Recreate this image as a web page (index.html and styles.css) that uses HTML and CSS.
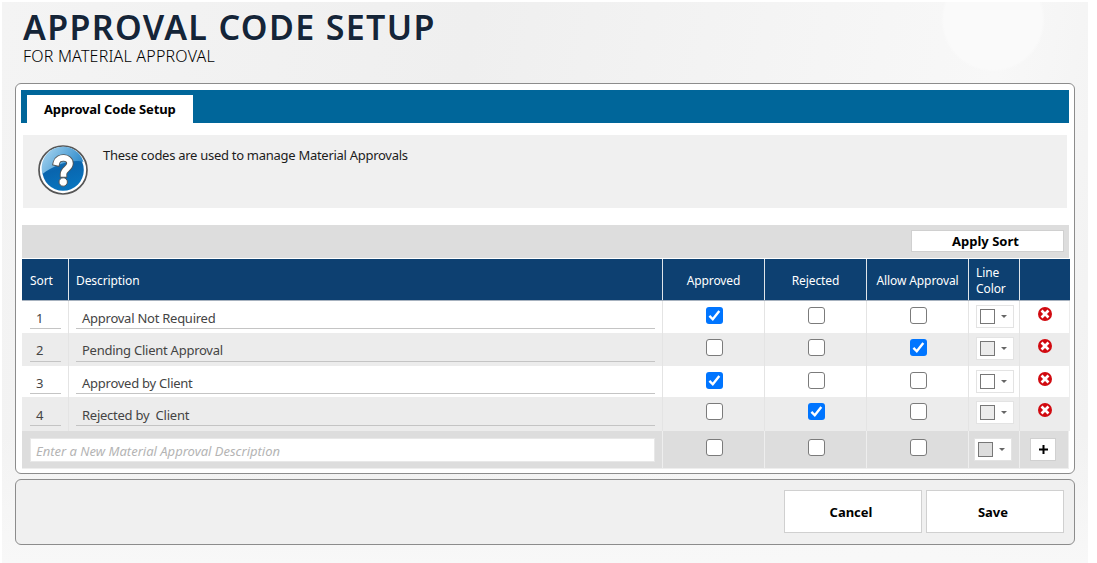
FILE: index.html
```html
<!DOCTYPE html>
<html lang="en">
<head>
<meta charset="utf-8">
<title>Approval Code Setup</title>
<link rel="stylesheet" href="styles.css">
</head>
<body>
<svg width="0" height="0" class="defs">
  <defs>
    <symbol id="remove" viewBox="0 0 14 14"><circle cx="7" cy="7" r="7" fill="#d10a10"/><path d="M4.5 4.5l5 5M9.5 4.5l-5 5" stroke="#fff" stroke-width="2.7" stroke-linecap="square"/></symbol>
  </defs>
</svg>
<div class="page">
  <header class="head">
    <h1 class="title">APPROVAL CODE SETUP</h1>
    <div class="subtitle">FOR MATERIAL APPROVAL</div>
  </header>
  <main class="panel">
    <nav class="tabs"><div class="tab"><span>Approval Code Setup</span></div></nav>
    <section class="info">
      <svg class="help" width="50" height="50" viewBox="0 0 50 50">
        <defs>
          <linearGradient id="blue" x1="0" y1="0" x2="0.3" y2="1"><stop offset="0" stop-color="#2f86c6"/><stop offset=".55" stop-color="#0965ae"/><stop offset="1" stop-color="#0873bd"/></linearGradient>
          <linearGradient id="shine" x1="0" y1="0" x2="1" y2=".5"><stop offset="0" stop-color="#b0daf2"/><stop offset="1" stop-color="#2d8acb"/></linearGradient>
        </defs>
        <circle cx="25" cy="25" r="24" fill="#fff" stroke="#555" stroke-width="1.7"/>
        <circle cx="25" cy="25" r="20.8" fill="url(#blue)"/>
        <path d="M4.5 29A20.8 20.8 0 0 1 45.5 17C40 15 31 16 23 19 15 22 9 25 4.500 29Z" fill="url(#shine)"/>
        <path d="M18.500 17.500C20 11 32 11.500 32 18.200 32 23.500 25.500 24 25.500 29" fill="none" stroke="#555" stroke-width="7.400" stroke-linecap="square"/>
        <circle cx="25.200" cy="37" r="4.200" fill="#fff" stroke="#555"/>
        <path d="M18.500 17.500C20 11 32 11.500 32 18.200 32 23.500 25.500 24 25.500 29" fill="none" stroke="#fff" stroke-width="5.600" stroke-linecap="square"/>
      </svg>
      <p class="info-text">These codes are used to manage Material Approvals</p>
    </section>
    <div class="toolbar"><button class="btn apply">Apply Sort</button></div>
    <div class="table">
      <div class="row header">
        <div class="cell"><span>Sort</span></div><div class="cell"><span>Description</span></div>
        <div class="cell mid"><span>Approved</span></div><div class="cell mid"><span>Rejected</span></div><div class="cell mid"><span>Allow Approval</span></div>
        <div class="cell"><span>Line<br>Color</span></div><div class="cell"></div>
      </div>
      <div class="row r1">
        <div class="cell"><div class="field num">1</div></div><div class="cell"><div class="field desc">Approval Not Required</div></div>
        <div class="cell mid"><i class="check on"><svg viewBox="0 0 17 17"><path d="M3.400 8.800l3.400 3.500 6.500-8.300"/></svg></i></div><div class="cell mid"><i class="check"></i></div><div class="cell mid"><i class="check"></i></div>
        <div class="cell"><div class="picker"><i class="swatch"></i><i class="arrow"></i></div></div><div class="cell mid"><svg class="remove"><use href="#remove"/></svg></div>
      </div>
      <div class="row r2 alt">
        <div class="cell"><div class="field num">2</div></div><div class="cell"><div class="field desc">Pending Client Approval</div></div>
        <div class="cell mid"><i class="check"></i></div><div class="cell mid"><i class="check"></i></div><div class="cell mid"><i class="check on"><svg viewBox="0 0 17 17"><path d="M3.400 8.800l3.400 3.500 6.500-8.300"/></svg></i></div>
        <div class="cell"><div class="picker"><i class="swatch"></i><i class="arrow"></i></div></div><div class="cell mid"><svg class="remove"><use href="#remove"/></svg></div>
      </div>
      <div class="row r3">
        <div class="cell"><div class="field num">3</div></div><div class="cell"><div class="field desc">Approved by Client</div></div>
        <div class="cell mid"><i class="check on"><svg viewBox="0 0 17 17"><path d="M3.400 8.800l3.400 3.500 6.500-8.300"/></svg></i></div><div class="cell mid"><i class="check"></i></div><div class="cell mid"><i class="check"></i></div>
        <div class="cell"><div class="picker"><i class="swatch"></i><i class="arrow"></i></div></div><div class="cell mid"><svg class="remove"><use href="#remove"/></svg></div>
      </div>
      <div class="row r4 alt">
        <div class="cell"><div class="field num">4</div></div><div class="cell"><div class="field desc">Rejected by&nbsp; Client</div></div>
        <div class="cell mid"><i class="check"></i></div><div class="cell mid"><i class="check on"><svg viewBox="0 0 17 17"><path d="M3.400 8.800l3.400 3.500 6.500-8.300"/></svg></i></div><div class="cell mid"><i class="check"></i></div>
        <div class="cell"><div class="picker"><i class="swatch"></i><i class="arrow"></i></div></div><div class="cell mid"><svg class="remove"><use href="#remove"/></svg></div>
      </div>
      <div class="row new">
        <div class="cell wide"><div class="entry">Enter a New Material Approval Description</div></div>
        <div class="cell mid"><i class="check"></i></div><div class="cell mid"><i class="check"></i></div><div class="cell mid"><i class="check"></i></div>
        <div class="cell"><div class="picker"><i class="swatch"></i><i class="arrow"></i></div></div><div class="cell"><button class="add"><svg width="9" height="9" viewBox="0 0 9 9"><path d="M4.500 0v9M0 4.500h9" stroke="#000" stroke-width="2"/></svg></button></div>
      </div>
    </div>
  </main>
  <footer class="actions"><button class="btn big">Cancel</button><button class="btn big">Save</button></footer>
</div>
</body>
</html>
```
FILE: styles.css
```css
* { box-sizing: border-box; }
body { margin: 0; background: #fff; font-family: "Noto Sans", "Open Sans", sans-serif; font-size: 13px; color: #000; overflow: hidden; }
.defs { display: block; }
.page {
  margin: 2px 9px 0 2px; height: 561px; padding: 0 13px;
  background:
    radial-gradient(circle at 991px 18px, #fafafa 49px, rgba(250,250,250,0) 52px),
    linear-gradient(to top, #f8f8f8 0, rgba(248,248,248,0) 130px),
    linear-gradient(100deg, #f4f4f4 0%, #efefef 40%, #f8f8f8 85%, #f1f1f1 100%);
}
.head { height: 81px; padding: 0 8px; }
.title { margin: 0; padding-top: 2px; font-size: 34px; line-height: 46px; font-weight: 600; color: #152538; letter-spacing: 1.350px; white-space: nowrap; height: 42px; text-shadow: 0 0 2px #fff; }
.subtitle { font-size: 16px; line-height: 24px; letter-spacing: .2px; color: #000; font-weight: 300; }
.panel { height: 391px; border: 1.500px solid #8c8c8c; border-radius: 6px; background: #fff; padding: 6px 4px 0 6px; }
.tabs { height: 33px; width: 1048px; margin-left: -1px; background: #00669a; padding: 5px 0 0 6px; display: flex; }
.tab { background: #fff; width: 166px; height: 28px; line-height: 28px; padding-left: 17px; font-weight: 700; font-size: 13px; letter-spacing: -.15px; white-space: nowrap; }
.info { margin: 12px 0 0 1px; width: 1044px; height: 73px; background: #f0f0f0; display: flex; padding: 10px 15px; gap: 15px; }
.info-text { margin: 0; line-height: 20px; color: #1c1c1c; letter-spacing: -.28px; }
.toolbar { margin-top: 17px; width: 1047px; height: 33px; background: #ddd; display: flex; justify-content: flex-end; padding: 5px 5px 0 0; }
.btn { background: #fff; border: 1px solid #d0d0d0; font: 700 13px "Noto Sans", sans-serif; color: #000; padding: 0; letter-spacing: 0; }
.apply { width: 153px; height: 22px; line-height: 20px; padding-right: 4px; letter-spacing: 0; }
.table { width: 1048px; margin-top: 1px; }
.row { display: grid; grid-template-columns: 47px 594px 102px 102px 102px 51px 50px; background: #fff; }
.cell { border-right: 1px solid #e4e4e4; padding-left: 8px; }
.cell:last-child { border-right: 1px solid #ededed; }
.mid { display: flex; justify-content: center; align-items: flex-start; padding-left: 0; }
.header { height: 42px; background: #0d4071; border-bottom: 1px solid #a7b2bf; color: #fff; font-size: 12px; letter-spacing: -.1px; }
.header .cell { display: flex; align-items: center; line-height: 16px; padding-top: 2px; padding-left: 7px; white-space: nowrap; border-color: #dfe5ea; }
.header .cell:first-child { padding-left: 8px; }
.header .cell.mid { padding-left: 0; }
.header .cell:last-child { border-color: #0d4071; }
.alt { background: #ececec; }
.r1 { height: 32px; } .r2 { height: 33px; } .r3 { height: 31px; } .r4 { height: 34px; }
.field { height: 28px; border-bottom: 1px solid #c4c4c4; line-height: 34px; color: #444; letter-spacing: -.25px; white-space: nowrap; }
.r2 .field { height: 29px; }
.r4 .field { height: 29px; line-height: 36px; }
.num { width: 31px; padding-left: 6px; }
.desc { width: 579px; padding-left: 6px; margin-left: -1px; }
.check { width: 17px; height: 17px; margin-top: 6px; border: 1.500px solid #7b7b7b; border-radius: 3px; background: #fff; margin-left: 1px; }
.on { border: 0; background: #0075ff; }
.on svg { display: block; width: 17px; height: 17px; fill: none; stroke: #fff; stroke-width: 2.400; }
.picker { width: 38px; height: 23px; margin-top: 4px; margin-left: -1px; border: 1px solid #e3e3e3; background: #fff; display: flex; align-items: center; gap: 6px; padding-left: 3px; }
.swatch { width: 15px; height: 15px; border: 1px solid #777; background: inherit; }
.alt .swatch { background: #ececec; }
.arrow { border: 3px solid transparent; border-top-color: #666; border-bottom: 0; }
.remove { width: 14px; height: 14px; margin-top: 6px; margin-left: 1px; }
.new { height: 38px; grid-template-columns: 641px 102px 102px 102px 51px 49px; width: 1047px; background: #ddd; border-bottom: 1px solid #eee; }
.new .check { margin-top: 8px; }
.new .cell { border-color: #eee; }
.new .picker { margin-left: -3px; margin-top: 7px; }
.new .swatch { background: #ddd; }
.entry { width: 625px; height: 24px; margin: 7px 0 0 0; border: 1px solid #e8e8e8; background: #fff; color: #b4b4b4; font-style: italic; line-height: 24px; padding-left: 5px; letter-spacing: 0; white-space: nowrap; }
.add { width: 26px; height: 23px; margin: 7px 0 0 2px; border: 1px solid #d0d0d0; background: #fff; padding: 0; display: flex; align-items: center; justify-content: center; }
.actions { margin-top: 5px; height: 66px; border: 1.500px solid #8c8c8c; border-radius: 6px; background: #f0f0f0; display: flex; justify-content: flex-end; gap: 4px; padding: 10px 10px 0 0; }
.big { width: 138px; height: 43px; line-height: 43px; padding-right: 4px; }
```
